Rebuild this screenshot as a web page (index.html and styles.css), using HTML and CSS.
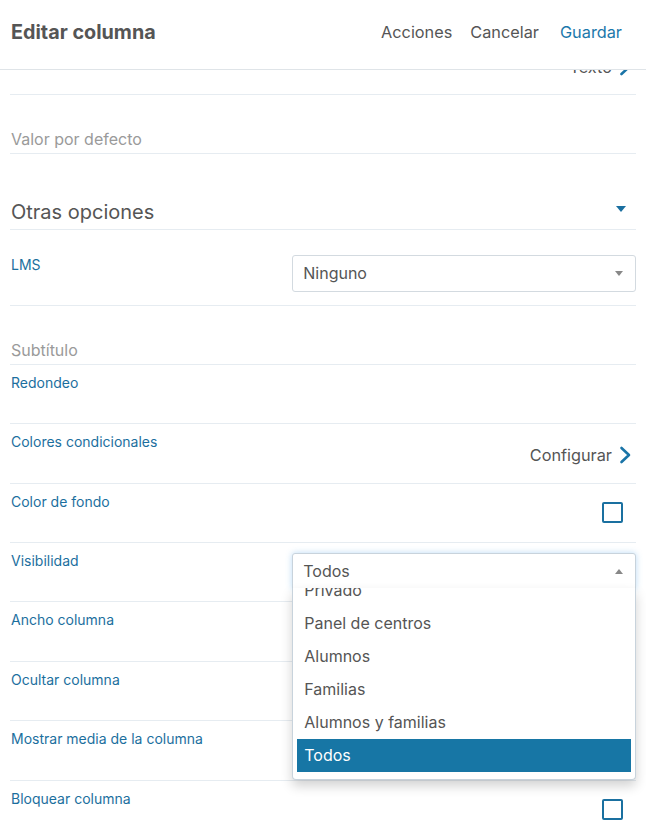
FILE: index.html
```html
<!DOCTYPE html>
<html lang="es">
<head>
<meta charset="utf-8">
<title>Editar columna</title>
<link rel="stylesheet" href="styles.css">
</head>
<body>
<header class="topbar">
  <h1 class="title">Editar columna</h1>
  <nav class="actions">
    <a class="action">Acciones</a>
    <a class="action cancel">Cancelar</a>
    <a class="action save">Guardar</a>
  </nav>
</header>
<main class="viewport">
  <div class="form">
    <div class="row">
      <span class="label">Tipo de columna</span>
      <span class="link-ctl">Texto
        <svg class="chev" width="12" height="18" viewBox="0 0 12 18"><path d="M2.5 2 L10 9 L2.5 16" fill="none" stroke="#1a74a7" stroke-width="2.6" stroke-linecap="round" stroke-linejoin="round"/></svg>
      </span>
    </div>
    <div class="row input-row"><span class="placeholder">Valor por defecto</span></div>
    <div class="row section">
      <span class="section-title">Otras opciones</span>
      <span class="caret-blue"></span>
    </div>
    <div class="row lms">
      <span class="label">LMS</span>
      <div class="select">
        <span>Ninguno</span>
        <span class="tri-down"></span>
      </div>
    </div>
    <div class="row input-row"><span class="placeholder">Subtítulo</span></div>
    <div class="row"><span class="label">Redondeo</span></div>
    <div class="row">
      <span class="label">Colores condicionales</span>
      <span class="link-ctl">Configurar
        <svg class="chev" width="12" height="18" viewBox="0 0 12 18"><path d="M2.5 2 L10 9 L2.5 16" fill="none" stroke="#1a74a7" stroke-width="2.6" stroke-linecap="round" stroke-linejoin="round"/></svg>
      </span>
    </div>
    <div class="row">
      <span class="label">Color de fondo</span>
      <span class="checkbox"></span>
    </div>
    <div class="row vis">
      <span class="label">Visibilidad</span>
      <div class="select-wrap">
        <div class="select focused">
          <span>Todos</span>
          <span class="tri-up"></span>
        </div>
        <div class="dropdown">
          <ul class="options">
            <li class="option">Privado</li>
            <li class="option">Panel de centros</li>
            <li class="option">Alumnos</li>
            <li class="option">Familias</li>
            <li class="option">Alumnos y familias</li>
            <li class="option selected">Todos</li>
          </ul>
        </div>
      </div>
    </div>
    <div class="row"><span class="label">Ancho columna</span></div>
    <div class="row"><span class="label">Ocultar columna</span></div>
    <div class="row"><span class="label">Mostrar media de la columna</span></div>
    <div class="row">
      <span class="label">Bloquear columna</span>
      <span class="checkbox"></span>
    </div>
  </div>
</main>
</body>
</html>
```
FILE: styles.css
```css
* { box-sizing: border-box; }
html, body { margin: 0; padding: 0; background: #fff; }
body {
  font-family: Inter, "Noto Sans", sans-serif;
  color: #555;
  width: 646px;
  height: 837px;
  overflow: hidden;
}
.topbar {
  height: 70px;
  border-bottom: 1px solid #dfe4e8;
  display: flex;
  align-items: center;
  padding: 0 24px 5px 11px;
  background: #fff;
}
.title {
  margin: 0;
  font-size: 19.8px;
  font-weight: 700;
  color: #555;
  flex: 1;
}
.actions { display: flex; align-items: center; }
.action { font-size: 16.3px; color: #555; }
.cancel { margin-left: 18px; }
.save { margin-left: 21px; color: #1b78ab; }

.viewport {
  height: 767px;
  overflow: hidden;
  padding: 0 10px;
}
.form { margin-top: -34.5px; }

.row {
  position: relative;
  display: grid;
  grid-template-columns: 45% 55%;
  align-items: start;
  min-height: 59.4px;
  padding: 8px 0 0 1px;
  border-bottom: 1px solid #e6ecf1;
}
.label {
  font-size: 14px;
  line-height: 20px;
  color: #1c6f9e;
}
.link-ctl {
  justify-self: end;
  display: flex;
  align-items: center;
  margin-top: 13px;
  margin-right: 5px;
  font-size: 16.3px;
  line-height: 20px;
  color: #555;
}
.chev { margin-left: 7px; }
.checkbox {
  justify-self: end;
  width: 21px;
  height: 21px;
  margin-top: 10px;
  margin-right: 13px;
  border: 2.5px solid #1a70a0;
  border-radius: 2px;
}

.input-row { display: block; padding-top: 34px; min-height: 59px; }
.placeholder { font-size: 16px; line-height: 20px; color: #9a9a9a; }

.section {
  display: flex;
  align-items: flex-start;
  justify-content: space-between;
  min-height: 76px;
  padding-top: 46px;
}
.section-title { font-size: 20px; line-height: 24px; color: #555; }
.caret-blue {
  width: 0; height: 0;
  margin-right: 10px;
  margin-top: 6px;
  border-left: 5px solid transparent;
  border-right: 5px solid transparent;
  border-top: 6px solid #1a6fa0;
}

.lms { min-height: 76px; padding-top: 25px; }
.select {
  display: flex;
  align-items: center;
  justify-content: space-between;
  height: 37px;
  padding: 0 10px 0 10px;
  border: 1px solid #d3dae0;
  border-radius: 3px;
  font-size: 16px;
  color: #555;
  background: #fff;
}
.tri-down, .tri-up {
  width: 0; height: 0;
  margin-right: 2px;
  border-left: 4px solid transparent;
  border-right: 4px solid transparent;
}
.tri-down { border-top: 5px solid #888; }
.tri-up { border-bottom: 5px solid #888; }

.vis { z-index: 2; }
.select-wrap { position: relative; margin-top: 2px; }
.focused {
  height: 36px;
  border-color: #c8d3dc;
  border-radius: 3px 3px 0 0;
  box-shadow: 0 0 6px rgba(102, 175, 233, 0.45);
}
.dropdown {
  position: absolute;
  left: 0;
  right: 0;
  top: 35px;
  height: 192px;
  overflow: hidden;
  background: #fff;
  border: 1px solid #c8d3dc;
  border-top: none;
  border-radius: 0 0 4px 4px;
  box-shadow: 0 6px 12px rgba(0, 0, 0, 0.18);
}
.options {
  list-style: none;
  margin: -19px 0 0 0;
  padding: 5px 4px 8px 4px;
}
.option {
  height: 33px;
  line-height: 33px;
  padding-left: 7px;
  font-size: 16px;
  color: #555;
}
.selected { background: #1776a5; color: #fff; }
```
